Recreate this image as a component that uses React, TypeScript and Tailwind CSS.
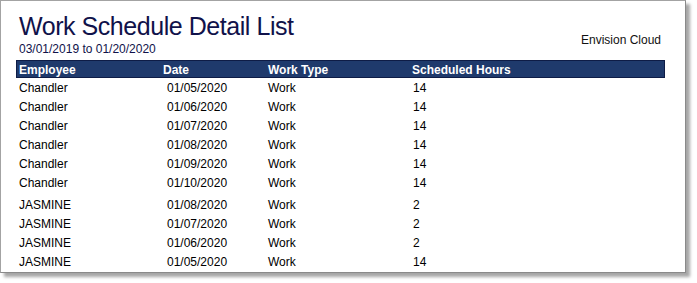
const rows = [
  { name: "Chandler", date: "01/05/2020", type: "Work", hours: "14" },
  { name: "Chandler", date: "01/06/2020", type: "Work", hours: "14" },
  { name: "Chandler", date: "01/07/2020", type: "Work", hours: "14" },
  { name: "Chandler", date: "01/08/2020", type: "Work", hours: "14" },
  { name: "Chandler", date: "01/09/2020", type: "Work", hours: "14" },
  { name: "Chandler", date: "01/10/2020", type: "Work", hours: "14" },
  { name: "JASMINE", date: "01/08/2020", type: "Work", hours: "2", groupStart: true },
  { name: "JASMINE", date: "01/07/2020", type: "Work", hours: "2" },
  { name: "JASMINE", date: "01/06/2020", type: "Work", hours: "2" },
  { name: "JASMINE", date: "01/05/2020", type: "Work", hours: "14" },
]

export default function App() {
  return (
    <div className="w-[697px] h-[283px] bg-white font-['Liberation_Sans',Arial,sans-serif]">
      <div className="w-[686px] h-[273px] border border-[#a3a3a3] border-r-[#8a8a8a] border-b-[#8a8a8a] bg-white shadow-[4px_4px_3px_rgba(0,0,0,0.35)] overflow-hidden pl-[15px] pr-[20px]">
        <div className="flex justify-between items-start">
          <div className="pl-[3px]">
            <div className="mt-[13px] text-[25px] tracking-[-0.45px] leading-none text-[#10124a]">Work Schedule Detail List</div>
            <div className="mt-[4px] text-[12px] leading-none text-[#10124a]">03/01/2019 to 01/20/2020</div>
          </div>
          <div className="mt-[33px] text-[12px] leading-none text-[#111] mr-[4px]">Envision Cloud</div>
        </div>

        <div className="mt-[5px] h-[18px] border border-[#0e1c46] bg-[#1f3a6c] text-white font-bold text-[12px] grid grid-cols-[144px_105px_144px_1fr] items-center pl-[2px]">
          <div>Employee</div>
          <div>Date</div>
          <div>Work Type</div>
          <div>Scheduled Hours</div>
        </div>

        <div className="text-[12px] text-black">
          {rows.map((r, i) => (
            <div
              key={i}
              className={`h-[19px] grid grid-cols-[148px_101px_145px_1fr] items-center pl-[3px] ${r.groupStart ? "mt-[3px]" : ""}`}
            >
              <div>{r.name}</div>
              <div>{r.date}</div>
              <div>{r.type}</div>
              <div>{r.hours}</div>
            </div>
          ))}
        </div>
      </div>
    </div>
  )
}
